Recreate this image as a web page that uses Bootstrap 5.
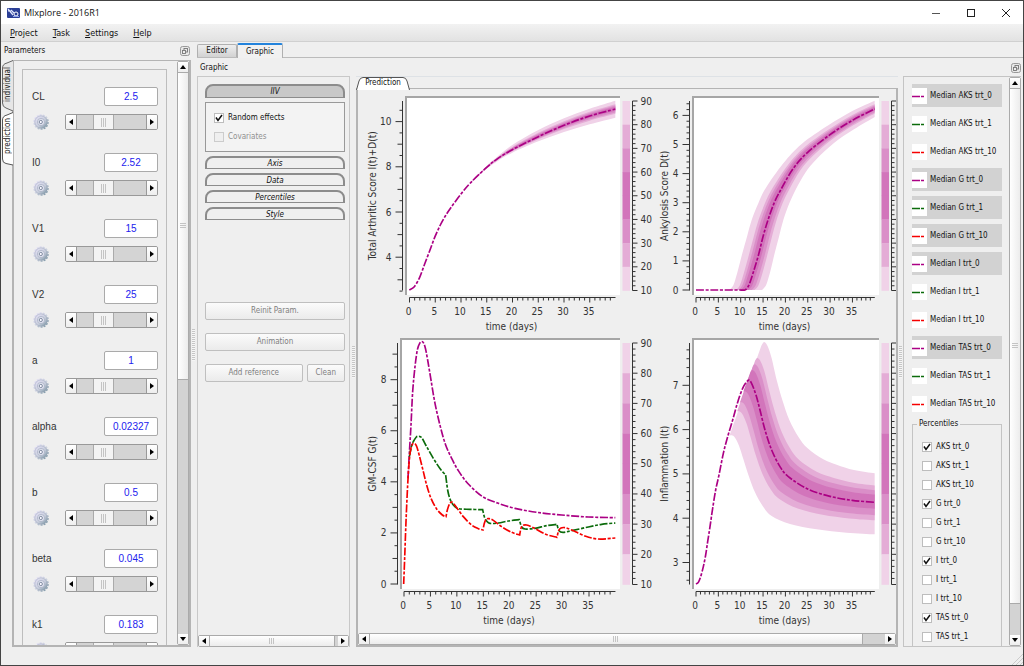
<!DOCTYPE html>
<html lang="en">
<head>
<meta charset="utf-8">
<meta name="viewport" content="width=device-width, initial-scale=1">
<title>Mlxplore - 2016R1</title>
<link rel="stylesheet" href="https://cdn.jsdelivr.net/npm/bootstrap@5.3.0/dist/css/bootstrap.min.css">
<style>
  :root { --ui: "DejaVu Sans Condensed", "DejaVu Sans", sans-serif; --line: #b4b4b4; }
  body { font: 8px/12px var(--ui); color: #111; background: #efefef; }
  button { font: inherit; color: inherit; padding: 0; border: 0; background: none; }
  .app-window { border: 1px solid #444; }
  .title-bar { height: 23px; background: #fff; font: 9px/22px "Open Sans", sans-serif; padding-left: 6px; }
  .win-btn { width: 35px; height: 22px; }
  .menu-bar { height: 18px; font-size: 9px; line-height: 19px; padding-left: 9px; gap: 15px; border-bottom: 1px solid #d0d0d0; background: linear-gradient(#f2f2f2, #e2e2e2); }
  .menu-bar a { color: #111; text-decoration: none; }
  .menu-bar u { text-underline-offset: 1px; }
  .status-bar { height: 18px; }
  .dock-left { width: 190px; }
  .dock-head { height: 18px; padding: 0 1px 0 3px; }
  .float-btn { width: 10px; height: 10px; line-height: 0; }
  .side-tabs { width: 11px; }
  .side-tab { height: 52px; width: 12px; margin-left: 1px; display: block; }
  .side-tab svg { position: absolute; left: 0; top: 0; }
  .side-tab span { writing-mode: vertical-rl; transform: rotate(180deg); position: relative; line-height: 12px; }
  .frame { border: 2px solid var(--line); border-top-width: 1px; }
  .param-box { border: 1px solid #bdbdbd; width: 145px; margin: 8px 0 -20px 8px; padding: 17px 8px 0 9px; flex: none; }
  .param { height: 66px; font: 10px/12px "Liberation Sans", Arial, sans-serif; color: #333; flex: none; }
  .param input[type=text] { width: 54px; height: 19px; border: 1px solid #aaa; border-radius: 2px; color: #22e; text-align: center; background: #fff; padding: 0; }
  .gear-icon { margin-left: 1px; }
  .slider-box { width: 93px; height: 16px; border: 1px solid #999; border-radius: 2px; overflow: hidden; }
  .arrow { background: linear-gradient(#fff, #eee); line-height: 0; flex: none; display: flex; align-items: center; justify-content: center; }
  .slider-box .arrow { width: 10px; }
  input[type=range] { -webkit-appearance: none; appearance: none; width: 71px; height: 14px; margin: 0; background: #d4d4d4; border: 1px solid #999; border-width: 0 1px; }
  input[type=range]::-webkit-slider-thumb { -webkit-appearance: none; width: 21px; height: 14px; border: 1px solid #aaa; border-width: 0 1px; background: linear-gradient(90deg, #c4c4c4 1px, transparent 1px 2px, #c4c4c4 2px 3px, transparent 3px 4px, #c4c4c4 4px) center / 5px 9px no-repeat, #f3f3f3; }
  .sb-v { width: 12px; border: 1px solid #aaa; border-radius: 2px; background: #d3d3d3; flex: none; }
  .sb-v .arrow { height: 10px; }
  .sb-v .thumb { background: linear-gradient(90deg, #fff, #ececec); border: 1px solid #aaa; border-width: 1px 0; }
  .sb-h { height: 12px; border: 1px solid #aaa; border-radius: 2px; background: #d3d3d3; flex: none; }
  .sb-h .arrow { width: 10px; }
  .sb-h .thumb { background: linear-gradient(#fff, #ececec); border: 1px solid #aaa; border-width: 0 1px; }
  .thumb { display: flex; align-items: center; justify-content: center; }
  .thumb i { width: 6px; height: 6px; }
  .sb-h .thumb i { background: repeating-linear-gradient(90deg, #c4c4c4 0 1px, transparent 1px 2px); }
  .sb-v .thumb i { background: repeating-linear-gradient(#c4c4c4 0 1px, transparent 1px 2px); }
  .splitter { flex: none; display: flex; align-items: center; justify-content: center; }
  .splitter i { width: 3px; height: 32px; background: repeating-linear-gradient(#c6c6c6 0 1px, #f6f6f6 1px 2px); }
  .main-area { min-width: 0; padding-left: 1px; }
  .main-tabs { height: 16px; border-bottom: 1px solid #bbb; }
  .main-tab { height: 13px; align-self: flex-end; border: 1px solid #b0b0b0; border-bottom: 0; border-radius: 2px 2px 0 0; background: linear-gradient(#eee, #d2d2d2); width: 40px; }
  .main-tab.current { height: 15px; width: 46px; background: #f1f1f1; border-top: 2px solid #2383dc; margin-bottom: -1px; position: relative; }
  .page-head { height: 18px; padding: 2px 2px 0 3px; }
  .ctl-panel { width: 153px; border: 1px solid #c8c8c8; border-bottom: 0; flex: none; }
  .ctl-body { padding: 7px 4px 0 7px; }
  .fold { height: 13px; border: 2px solid #8c8c8c; border-bottom-width: 1px; border-radius: 8px 8px 0 0; font-style: italic; line-height: 12px; background: #efefef; width: 140px; display: block; margin-bottom: 4px; }
  .fold.open { background: #c8c8c8; height: 14px; }
  .fold-body { width: 140px; height: 50px; border: 1px solid #999; background: #f3f3f3; padding: 8px; margin-bottom: 4px; }
  .check { display: flex; align-items: center; gap: 4px; }
  .fold-body .check { height: 20px; }
  .fold-body .check:first-child { height: 14px; margin-bottom: 2px; }
  input[type=checkbox] { -webkit-appearance: none; appearance: none; width: 10px; height: 10px; margin: 0; border: 1px solid #bdbdbd; background: #fff; flex: none; }
  input[type=checkbox]:checked { background: #fff url("data:image/svg+xml,%3Csvg xmlns='http://www.w3.org/2000/svg' viewBox='0 0 8 8'%3E%3Cpath d='M1 3.5L3 6.5L7 1' fill='none' stroke='%23111' stroke-width='1.5'/%3E%3C/svg%3E") center / 8px 8px no-repeat; }
  input[type=checkbox]:disabled { background: #efefef; border-color: #ccc; }
  .muted-label { color: #909090; }
  .action-gap { height: 78px; }
  .push { height: 18px; border: 1px solid #bfbfbf; border-radius: 2px; background: linear-gradient(#fbfbfb, #ebebeb); color: #808080; }
  .stack-gap { margin-bottom: 13px; }
  .pred-tabs { height: 12px; }
  .pred-tab { width: 54px; height: 12px; line-height: 12px; z-index: 1; margin-bottom: -1px; }
  .pred-tab svg { position: absolute; left: 0; top: 0; }
  .pred-tab span { position: relative; }
  .chart-grid { display: grid; grid-template-columns: 297fr 241fr; }
  .chart-grid svg { width: 100%; height: auto; display: block; font-size: 10px; fill: #333; }
  .legend-dock { width: 118px; border: 1px solid #c4c4c4; border-right: 0; flex: none; }
  .legend-list { padding: 7px 0 0 8px; width: 98px; }
  .legend-item { height: 23px; margin-bottom: 5px; width: 90px; display: flex; align-items: center; gap: 3px; flex: none; white-space: nowrap; }
  .legend-item.on { background: #d2d2d2; }
  .legend-item svg { flex: none; background: #fff; }
  .pct-box { border: 1px solid #c4c4c4; border-bottom: 0; width: 90px; height: 240px; margin: -2px 0 -16px; padding: 7px 0 0 9px; }
  .pct-box legend { font-size: 8px; line-height: 12px; width: auto; margin: 0 0 0 -5px; padding: 0 2px; float: none; }
  .pct-box .check { height: 19px; margin: 0; }
</style>
</head>
<body>
<svg width="0" height="0" class="position-absolute" aria-hidden="true">
  <defs>
    <linearGradient id="steel" x1="0" y1="0" x2="1" y2="1"><stop offset="0" stop-color="#e9e4fa"/><stop offset=".55" stop-color="#c9cfdd"/><stop offset="1" stop-color="#6f8c9a"/></linearGradient>
    <symbol id="gear" viewBox="0 0 16 16"><circle cx="8" cy="8" r="6.600" fill="url(#steel)"/><circle cx="8" cy="8" r="7" fill="none" stroke="url(#steel)" stroke-width="1.600" stroke-dasharray="2 1.140"/><circle cx="8" cy="8" r="6.200" fill="none" stroke="#8d97b0" stroke-width=".6" opacity=".7"/><circle cx="8" cy="8" r="3.600" fill="#dfe2ee" stroke="#a6aec2" stroke-width=".7"/><circle cx="7.800" cy="8" r="1.600" fill="#f8f8ff" stroke="#77829a" stroke-width=".9"/></symbol>
    <symbol id="al" viewBox="0 0 8 8"><path d="M6 1v6L2 4z" fill="#000"/></symbol>
    <symbol id="ar" viewBox="0 0 8 8"><path d="M2 1v6l4-3z" fill="#000"/></symbol>
    <symbol id="au" viewBox="0 0 8 8"><path d="M1 6h6L4 2z" fill="#000"/></symbol>
    <symbol id="ad" viewBox="0 0 8 8"><path d="M1 2h6L4 6z" fill="#000"/></symbol>
    <symbol id="float" viewBox="0 0 10 10"><rect x=".5" y=".5" width="9" height="9" rx="2" fill="#e8e8e8" stroke="#999"/><rect x="4" y="2.500" width="3.500" height="3.500" fill="none" stroke="#777" stroke-width=".9"/><rect x="2.500" y="4.500" width="3" height="3" fill="#eee" stroke="#777" stroke-width=".9"/></symbol>
  </defs>
</svg>

<div class="app-window vh-100 d-flex flex-column overflow-hidden">
  <header class="title-bar d-flex align-items-center flex-shrink-0">
    <svg width="13" height="10" viewBox="0 0 13 10" aria-hidden="true"><rect width="13" height="10" rx="1" fill="#2b3f96"/><path d="M1 1l5 6M4 2l3 3M1 3h3" stroke="#dfe6ff" stroke-width="1.2"/><circle cx="9" cy="6" r="2" fill="none" stroke="#fff"/><path d="M6 8.500h6" stroke="#8fa4ee"/></svg>
    <span class="ms-1">Mlxplore - 2016R1</span>
    <div class="d-flex ms-auto">
      <button class="win-btn" aria-label="Minimize"><svg width="10" height="10" viewBox="0 0 10 10"><path d="M1 5.500h8" stroke="#555"/></svg></button>
      <button class="win-btn" aria-label="Maximize"><svg width="10" height="10" viewBox="0 0 10 10"><rect x="1.500" y="1.500" width="7" height="7" fill="none" stroke="#222"/></svg></button>
      <button class="win-btn" aria-label="Close"><svg width="10" height="10" viewBox="0 0 10 10"><path d="M1 1l8 8M9 1l-8 8" stroke="#222"/></svg></button>
    </div>
  </header>
  <nav class="menu-bar d-flex flex-shrink-0" aria-label="Menu">
    <a href="#"><u>P</u>roject</a><a href="#"><u>T</u>ask</a><a href="#"><u>S</u>ettings</a><a href="#"><u>H</u>elp</a>
  </nav>

  <div class="d-flex flex-grow-1" style="min-height:0">
    <aside class="dock-left d-flex flex-column flex-shrink-0">
      <div class="dock-head d-flex align-items-center justify-content-between flex-shrink-0">
        <span>Parameters</span>
        <button class="float-btn" aria-label="Float parameters"><svg width="10" height="10"><use href="#float"/></svg></button>
      </div>
      <div class="d-flex flex-grow-1" style="min-height:0">
        <div class="side-tabs flex-shrink-0">
          <button class="side-tab position-relative"><svg width="12" height="52" viewBox="0 0 12 52"><path d="M11 .5L5 3Q.5 4 .5 8V43Q.5 47 4 48L11 51" fill="#e6e6e6" stroke="#666"/></svg><span>individual</span></button>
          <button class="side-tab position-relative"><svg width="12" height="54" viewBox="0 0 12 54"><path d="M11 .5L5 3Q.5 4 .5 8V47Q.5 51 4 51.500L11 53" fill="#fff" stroke="#555"/></svg><span>prediction</span></button>
        </div>
        <div class="frame flex-grow-1 d-flex overflow-hidden">
          <div class="param-box" id="params"></div>
          <div class="sb-v ms-auto d-flex flex-column">
            <button class="arrow" aria-label="Scroll up"><svg width="8" height="8"><use href="#au"/></svg></button>
            <div class="thumb" style="height:53%"><i></i></div>
            <div class="flex-grow-1"></div>
            <button class="arrow" aria-label="Scroll down"><svg width="8" height="8"><use href="#ad"/></svg></button>
          </div>
        </div>
      </div>
    </aside>
    <div class="splitter" style="width:5px"><i></i></div>

    <main class="main-area flex-grow-1 d-flex flex-column">
      <div class="main-tabs d-flex flex-shrink-0">
        <button class="main-tab">Editor</button><button class="main-tab current">Graphic</button>
      </div>
      <div class="page-head d-flex align-items-center justify-content-between flex-shrink-0">
        <span>Graphic</span>
        <button class="float-btn" aria-label="Float legend"><svg width="10" height="10"><use href="#float"/></svg></button>
      </div>
      <div class="d-flex flex-grow-1" style="min-height:0;padding-right:2px">
        <section class="ctl-panel d-flex flex-column">
          <div class="ctl-body flex-grow-1 overflow-hidden">
            <button class="fold open">IIV</button>
            <div class="fold-body">
              <label class="check"><input type="checkbox" checked>Random effects</label>
              <label class="check muted-label"><input type="checkbox" disabled>Covariates</label>
            </div>
            <button class="fold">Axis</button>
            <button class="fold">Data</button>
            <button class="fold">Percentiles</button>
            <button class="fold">Style</button>
            <div class="action-gap"></div>
            <button class="push w-100 d-block stack-gap">Reinit Param.</button>
            <button class="push w-100 d-block stack-gap">Animation</button>
            <div class="d-flex gap-1"><button class="push flex-grow-1">Add reference</button><button class="push px-2">Clean</button></div>
          </div>
          <div class="sb-h d-flex">
            <button class="arrow" aria-label="Scroll left"><svg width="8" height="8"><use href="#al"/></svg></button>
            <div class="thumb flex-grow-1"><i></i></div><div style="width:3px"></div>
            <button class="arrow" aria-label="Scroll right"><svg width="8" height="8"><use href="#ar"/></svg></button>
          </div>
        </section>
        <div class="splitter" style="width:6px"><i></i></div>

        <section class="flex-grow-1 d-flex flex-column" style="min-width:0">
          <div class="pred-tabs flex-shrink-0 border-top">
            <button class="pred-tab position-relative"><svg width="54" height="13" viewBox="0 0 54 13"><path d="M.5 13L3 4Q4 .5 7 .5H47Q50 .5 51 4L53.500 13" fill="#fff" stroke="#555"/></svg><span>Prediction</span></button>
          </div>
          <div class="frame flex-grow-1 d-flex flex-column overflow-hidden">
            <div class="chart-grid flex-grow-1 overflow-hidden align-content-start" id="charts"></div>
            <div class="sb-h d-flex">
              <button class="arrow" aria-label="Scroll left"><svg width="8" height="8"><use href="#al"/></svg></button>
              <div class="thumb flex-grow-1"><i></i></div><div style="width:22px"></div>
              <button class="arrow" aria-label="Scroll right"><svg width="8" height="8"><use href="#ar"/></svg></button>
            </div>
          </div>
        </section>
        <div class="splitter" style="width:5px"><i></i></div>

        <aside class="legend-dock d-flex">
          <div class="legend-list d-flex flex-column overflow-hidden">
            <div id="legend"></div>
            <fieldset class="pct-box" id="pct"><legend>Percentiles</legend></fieldset>
          </div>
          <div class="sb-v ms-auto d-flex flex-column">
            <button class="arrow" aria-label="Scroll up"><svg width="8" height="8"><use href="#au"/></svg></button>
            <div class="thumb" style="height:91%"><i></i></div>
            <div class="flex-grow-1"></div>
            <button class="arrow" aria-label="Scroll down"><svg width="8" height="8"><use href="#ad"/></svg></button>
          </div>
        </aside>
      </div>
    </main>
  </div>
  <footer class="status-bar d-flex justify-content-end align-items-end flex-shrink-0">
    <svg width="12" height="12" viewBox="0 0 12 12" aria-hidden="true"><path d="M1 12L12 1M5 12l7-7M9 12l3-3" stroke="#ccc"/></svg>
  </footer>
</div>

<script src="https://cdn.jsdelivr.net/npm/bootstrap@5.3.0/dist/js/bootstrap.bundle.min.js"></script>
<script>
const C = { p: '#ab0084', g: '#0b6b0b', r: '#f50000' };

// parameter list
document.getElementById('params').innerHTML = [['CL','2.5'],['I0','2.52'],['V1','15'],['V2','25'],['a','1'],['alpha','0.02327'],['b','0.5'],['beta','0.045'],['k1','0.183']]
  .map(([n, v]) => `<div class="param">
    <div class="d-flex align-items-center justify-content-between"><label for="v-${n}">${n}</label><input type="text" id="v-${n}" value="${v}"></div>
    <div class="d-flex align-items-center justify-content-between mt-2"><svg class="gear-icon" width="16" height="16" aria-hidden="true"><use href="#gear"/></svg>
    <div class="slider-box d-flex"><button class="arrow" aria-label="Decrease ${n}"><svg width="8" height="8"><use href="#al"/></svg></button><input type="range" value="33" aria-label="${n}"><button class="arrow" aria-label="Increase ${n}"><svg width="8" height="8"><use href="#ar"/></svg></button></div></div></div>`).join('');

// legend and percentile choices
const arms = [['0', C.p], ['1', C.g], ['10', C.r]], outs = ['AKS', 'G', 'I', 'TAS'];
document.getElementById('legend').innerHTML = outs.map(o => arms.map(([a, c]) =>
  `<button class="legend-item ${a === '0' || o === 'G' ? 'on' : ''}"><svg width="15" height="16" viewBox="0 0 15 16"><path d="M0 8.500h8M9 8.500h3" stroke="${c}" stroke-width="1.500"/></svg>Median ${o} trt_${a}</button>`).join('')).join('');
document.getElementById('pct').insertAdjacentHTML('beforeend', outs.flatMap(o => arms.map(([a]) =>
  `<label class="check"><input type="checkbox" ${a === '0' ? 'checked' : ''}>${o} trt_${a}</label>`)).slice(0, 11).join(''));

// smooth curve through points; later segments continue the path
function curve(p, first = 'M') {
  let d = first + p[0];
  for (let i = 0; i < p.length - 1; i++) {
    const a = p[i - 1] || p[i], b = p[i], c = p[i + 1], e = p[i + 2] || c;
    d += `C${b[0] + (c[0] - a[0]) / 6},${b[1] + (c[1] - a[1]) / 6} ${c[0] - (e[0] - b[0]) / 6},${c[1] - (e[1] - b[1]) / 6} ${c}`;
  }
  return d;
}
const pts = s => s.trim().split(/\s+/).map(q => q.split(',').map(Number));
const mix = (a, b, f) => a.map((q, i) => [q[0] + (b[i][0] - q[0]) * f, q[1] + (b[i][1] - q[1]) * f]);
const SH = ['#f0d2e8', '#e4acd6', '#da8fc8', '#d275bb'];

function bands(mid, hi, lo) {
  const fu = [1, .58, .42, .27], fl = [1, .56, .4, .2];
  return SH.map((c, i) => `<path d="${curve(mix(mid, hi, fu[i]))}${curve(mix(mid, lo, fl[i]).reverse(), 'L')}Z" fill="${c}"/>`).join('');
}
const trace = (s, c) => `<path d="${s.split('|').map((q, i) => curve(pts(q), i ? 'L' : 'M')).join('')}" fill="none" stroke="${c}" stroke-width="5" stroke-dasharray="24 5 9 5"/>`;

function chart(o) {
  const [x0, y0, w, h] = o.view, b = o.box; let s = '', t = '';
  const ln = (x1, y1, x2, y2) => { t += `M${x1},${y1}L${x2},${y2}`; };
  const tx = (x, y, str, anchor, extra = '') => { s += `<text x="${x}" y="${y}" text-anchor="${anchor}" ${extra}>${str}</text>`; };
  s += `<rect x="${b.l}" y="${b.t}" width="${b.r - b.l}" height="${b.b - b.t}" fill="#fff"/><path d="M${b.l + 1},${b.b}V${b.t + 1}H${b.r}" fill="none" stroke="#a6a6a6" stroke-width="2"/>`;
  s += `<g transform="translate(${o.org}) scale(.33333)">${o.draw}</g>`;
  const yt = b.t + 5, yb = b.b - 4.500, ax = b.l - 2.500;
  ln(ax, yt, ax, yb);
  const Y = o.y, n = Math.round(1 / Y.minor * 12);
  for (let i = 0; i <= n; i++) {
    const v = i * Y.minor, y = Y.ref - (v - Y.at) * Y.unit;
    if (y < yt - 1 || y > yb + 1) continue;
    const major = Math.abs(v / Y.major - Math.round(v / Y.major)) < 1e-6;
    const half = Y.major === 2 && Number.isInteger(v);
    ln(ax - (major ? 7 : half ? 5 : 3), y, ax, y);
    if (major) tx(ax - 11, y + 3.500, Math.round(v), 'end');
  }
  const bx = b.b + 2.500;
  ln(o.x0, bx, o.x0 + 40 * o.xs, bx);
  for (let d = 0; d < 40; d++) {
    const x = o.x0 + d * o.xs;
    ln(x, bx, x, bx + (d % 5 ? 3 : 5));
    if (d % 5 === 0) tx(x - 1, bx + 17, d, 'middle');
  }
  tx((b.l + b.r) / 2 - 1, bx + 32, 'time (days)', 'middle');
  const cy = (yt + yb) / 2, lx = o.lx;
  tx(lx, cy, o.label, 'middle', `transform="rotate(-90 ${lx} ${cy})"`);
  const st = (yb - yt) / 8, cx = b.r + 2.500, sx = b.r + 12.500;
  [0, 1, 2, 3, 3, 2, 1, 0].forEach((k, i) => { s += `<rect x="${cx}" y="${yt + i * st}" width="7.500" height="${st + .3}" fill="${SH[k]}"/>`; });
  ln(sx, yt, sx, yb);
  for (let i = 0; i <= 40; i++) ln(sx, yb - i * st / 5, sx + (i % 5 ? 3 : 5), yb - i * st / 5);
  if (o.scale) for (let i = 0; i <= 8; i++) tx(sx + 8, yb - i * st + 3.500, 10 + i * 10, 'start');
  return `<svg viewBox="${x0} ${y0} ${w} ${h}" role="img" aria-label="${o.label}">${s}<path d="${t}" stroke="#333" fill="none"/></svg>`;
}

const tas = '163,660 178,650 194,622 209,582 225,540 240,500 256,465 271,438 287,414 318,372 348,337 395,292 425,268 472,239 550,200 627,166 704,138 781,117';
const aks = '285,660 292,653 299,640 312,600 326,553 339,500 354,450 372,400 392,360 430,295 473,247 540,194 607,151 674,117';
const infl = '290,168 295,166 305,176 318,210 330,255 345,315 365,375 390,425 415,455 473,492 540,514 607,526 674,532';

document.getElementById('charts').innerHTML = [
  { view: [358, 89, 297, 243], box: { l: 405, t: 96, r: 620, b: 295 }, org: '355,70', x0: 409.5, xs: 5.150, lx: 376, scale: true,
    label: 'Total Arthritic Score I(t)+D(t)', y: { at: 6, ref: 212, unit: 22.600, minor: .5, major: 2 },
    draw: bands(pts(tas).slice(10), pts('348,336 395,288 425,262 472,225 550,180 627,145 704,116 781,92'), pts('348,338 395,296 425,275 472,248 550,214 627,186 704,163 781,143')) + trace(tas, C.p) },
  { view: [655, 89, 241, 243], box: { l: 692, t: 96, r: 879, b: 295 }, org: '650,70', x0: 696, xs: 4.470, lx: 668,
    label: 'Ankylosis Score D(t)', y: { at: 0, ref: 290, unit: 29.100, minor: .2, major: 1 },
    draw: bands(pts(aks), pts('238,660 246,652 253,638 264,600 277,550 291,500 305,450 325,400 347,355 400,280 455,222 535,166 607,123 674,92'), pts('336,660 344,652 351,638 362,600 374,550 387,500 400,450 418,400 438,357 466,308 500,267 552,219 612,178 674,141')) + trace('138,660 200,660 270,660|' + '270,660 ' + aks, C.p) },
  { view: [358, 332, 297, 301], box: { l: 400, t: 338, r: 620, b: 589 }, org: '355,325', x0: 404, xs: 5.286, lx: 376, scale: true,
    label: 'GM-CSF G(t)', y: { at: 0, ref: 584, unit: 25.540, minor: .5, major: 2 },
    draw: trace('159,460 163,385 168,300 173,200 180,125 187,75 194,55 202,50 210,65 218,105 228,165 240,235 256,305 272,360 290,400 310,437 340,477 383,515 430,535 480,550 545,562 620,570 700,576 781,578', C.p)
      + trace('163,395 170,362 176,348 184,336 190,334 200,338 215,365 235,400 256,432 272,450|272,450 278,495 285,522 295,540 310,551 345,553 383,554|383,554 388,575 395,588 405,595 430,594 460,588 493,584|493,584 500,606 510,612 540,610 575,602 606,598|606,598 612,617 624,622 650,617 700,606 740,598 781,594', C.g)
      + trace('146,777 149,700 153,590 158,480 163,405 168,370 175,355 184,362 193,392 205,440 215,480 228,520 245,552 262,570 273,575|273,575 277,555 284,536 292,532 305,548 325,575 350,600 370,611 384,615|384,615 388,595 393,583 402,581 415,586 440,605 470,622 494,630|494,630 498,610 504,601 515,600 535,608 570,627 606,637|606,637 611,617 618,609 630,608 650,615 690,633 730,642 781,639', C.r) },
  { view: [655, 332, 241, 301], box: { l: 692, t: 338, r: 879, b: 589 }, org: '650,325', x0: 696, xs: 4.470, lx: 668,
    label: 'Inflammation I(t)', y: { at: 3, ref: 562.5, unit: 44.300, minor: .2, major: 1 },
    draw: bands(pts(infl), pts('334,62 343,51 354,66 365,100 380,165 397,225 418,285 445,335 473,370 520,403 560,419 612,435 674,445'), pts('238,333 245,331 255,338 267,362 280,402 296,452 315,502 338,543 365,573 420,597 500,613 590,623 674,628'))
      + trace('138,777 145,772 152,755 160,725 167,690 173,650 180,605 188,550 197,495 207,450 220,385 233,335 248,285 262,235 278,190 ' + infl.replace('290,168 ', ''), C.p) }
].map(chart).join('');
</script>
</body>
</html>
